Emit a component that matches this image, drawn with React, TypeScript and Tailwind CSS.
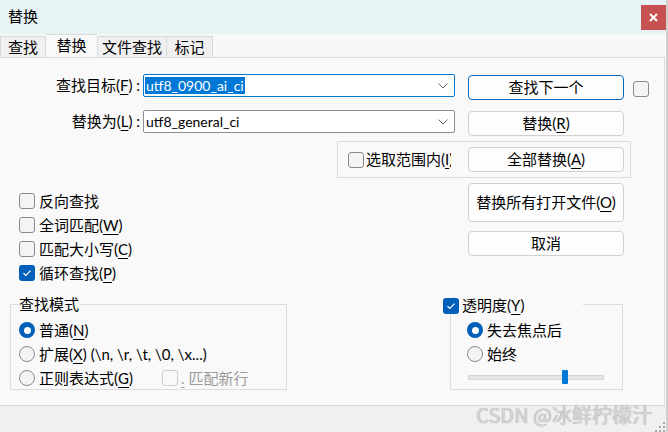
import React from 'react';

function Key({ k }: { k: string }) {
  return (
    <span>
      (<span className="underline underline-offset-[3px] decoration-1">{k}</span>)
    </span>
  );
}

function CheckBox({ checked = false, disabled = false }: { checked?: boolean; disabled?: boolean }) {
  if (checked) {
    return (
      <span className="w-4 h-4 shrink-0 rounded-[3px] bg-[#005fb8] flex items-center justify-center">
        <svg width="10" height="8" viewBox="0 0 10 8">
          <path d="M1.5 4.2 L3.8 6.4 L8.6 1.6" fill="none" stroke="#fff" strokeWidth="1.2" />
        </svg>
      </span>
    );
  }
  return (
    <span
      className={
        disabled
          ? 'block w-4 h-4 shrink-0 rounded-[3px] border border-[#cdcdcd] bg-[#f9f9f9]'
          : 'block w-4 h-4 shrink-0 rounded-[3px] border border-[#8a8a8a] bg-[#f4f4f4]'
      }
    />
  );
}

function Radio({ on = false }: { on?: boolean }) {
  if (on) {
    return (
      <span className="w-4 h-4 shrink-0 rounded-full bg-[#005fb8] flex items-center justify-center">
        <span className="w-[7px] h-[7px] rounded-full bg-white" />
      </span>
    );
  }
  return <span className="block w-4 h-4 shrink-0 rounded-full border border-[#8a8a8a] bg-[#f4f4f4]" />;
}

function Combo({ value, focused = false }: { value: string; focused?: boolean }) {
  return (
    <div
      className={
        'w-[312px] h-[23px] bg-white rounded-[2px] border flex items-center pl-[1px] pr-[6px] text-[14px] ' +
        (focused ? 'border-[#0078d4]' : 'border-[#8f8f8f]')
      }
    >
      <span className="flex-1">
        {focused ? (
          <span className="bg-[#0078d7] text-white leading-[17px] inline-block px-[1px]">{value}</span>
        ) : (
          <span className="leading-[17px] inline-block px-[1px]">{value}</span>
        )}
      </span>
      <svg width="10" height="6" viewBox="0 0 10 6">
        <path d="M0.5 0.5 L5 5 L9.5 0.5" fill="none" stroke="#606060" strokeWidth="1" />
      </svg>
    </div>
  );
}

function Btn({ children, main = false, tall = false }: { children: React.ReactNode; main?: boolean; tall?: boolean }) {
  return (
    <div
      className={
        'w-[156px] bg-[#fdfdfd] rounded-[4px] border flex items-center justify-center ' +
        (tall ? 'h-[39px] ' : 'h-[25px] ') +
        (main ? 'border-[#0067c0]' : 'border-[#d0d0d0]')
      }
    >
      {children}
    </div>
  );
}

const options = [
  { label: '反向查找', key: '', checked: false },
  { label: '全词匹配', key: 'W', checked: false },
  { label: '匹配大小写', key: 'C', checked: false },
  { label: '循环查找', key: 'P', checked: true },
];

export default function App() {
  return (
    <div className="w-[668px] h-[432px] flex flex-col bg-[#f9f9f9] border-r-2 border-[#cfcfcf] overflow-hidden text-[15px] text-black font-['Lato','Noto_Sans_CJK_SC',sans-serif]">
      {/* title bar */}
      <div className="h-[34px] shrink-0 bg-[#e8f3f6] flex items-start justify-between pl-2">
        <span className="mt-[6px] leading-[20px]">替换</span>
        <div className="mt-[5px] w-[25px] h-[25px] bg-[#c75050] flex items-center justify-center">
          <svg width="9" height="9" viewBox="0 0 9 9">
            <path d="M1 1 L8 8 M8 1 L1 8" stroke="#fff" strokeWidth="2" />
          </svg>
        </div>
      </div>

      {/* tabs */}
      <div className="h-[23px] shrink-0 bg-[#f8f8f8] flex items-end">
        <div className="w-[46px] h-[21px] bg-[#f0f0f0] border border-b-0 border-[#d9d9d9] flex items-center justify-center leading-none">查找</div>
        <div className="w-[51px] h-[23px] bg-[#f9f9f9] border-t border-[#d9d9d9] flex items-start justify-center pt-[1px] leading-[18px]">替换</div>
        <div className="w-[70px] h-[21px] bg-[#f0f0f0] border border-b-0 border-[#d9d9d9] flex items-center justify-center leading-none">文件查找</div>
        <div className="w-[46px] h-[21px] bg-[#f0f0f0] border border-b-0 border-l-0 border-[#d9d9d9] flex items-center justify-center leading-none">标记</div>
      </div>

      {/* panel */}
      <div className="w-[665px] h-[348px] shrink-0 border-t border-r border-[#dcdcdc] pt-[16px]">
        {/* find row */}
        <div className="flex items-start h-[26px]">
          <div className="w-[143px] h-[23px] pr-[3px] flex items-center justify-end whitespace-nowrap">
            查找目标<Key k="F" />&nbsp;:
          </div>
          <Combo value="utf8_0900_ai_ci" focused />
          <div className="ml-[13px] mt-[1px]">
            <Btn main>查找下一个</Btn>
          </div>
          <div className="ml-[9px] mt-[7px]">
            <CheckBox />
          </div>
        </div>

        {/* replace row */}
        <div className="flex items-start h-[26px] mt-[10px]">
          <div className="w-[143px] h-[23px] pr-[3px] flex items-center justify-end whitespace-nowrap">
            替换为<Key k="L" />&nbsp;:
          </div>
          <Combo value="utf8_general_ci" />
          <div className="ml-[13px] mt-[1px]">
            <Btn>
              替换<Key k="R" />
            </Btn>
          </div>
        </div>

        {/* selection range group */}
        <div className="ml-[337px] mt-[5px] w-[294px] h-[37px] border border-[#dcdcdc] flex items-center pl-[10px]">
          <CheckBox />
          <span className="ml-[2px] w-[85px] overflow-hidden whitespace-nowrap">
            选取范围内(<span className="underline underline-offset-[3px]">I</span>)
          </span>
          <div className="ml-[17px]">
            <Btn>
              全部替换<Key k="A" />
            </Btn>
          </div>
        </div>

        {/* options + buttons */}
        <div className="flex mt-[5px]">
          <div className="w-[468px] pl-[19px] pt-[6px] flex flex-col">
            {options.map((o, i) => (
              <div key={i} className="h-[24px] flex items-center gap-[4px] whitespace-nowrap">
                <CheckBox checked={o.checked} />
                <span>
                  {o.label}
                  {o.key && <Key k={o.key} />}
                </span>
              </div>
            ))}
          </div>
          <div className="flex flex-col gap-[9px]">
            <Btn tall>
              替换所有打开文件<Key k="O" />
            </Btn>
            <Btn>取消</Btn>
          </div>
        </div>

        {/* groups */}
        <div className="flex mt-[9px]">
          <fieldset className="ml-[10px] w-[277px] h-[96px] border border-[#dcdcdc] pl-[8px]">
            <legend className="ml-[-1px] px-[1px] leading-[20px]">查找模式</legend>
            <div className="pt-[4px] flex flex-col">
              <div className="h-[24px] flex items-center gap-[4px]">
                <Radio on />
                <span>
                  普通<Key k="N" />
                </span>
              </div>
              <div className="h-[24px] flex items-center gap-[4px] whitespace-nowrap">
                <Radio />
                <span>
                  扩展<Key k="X" /> (\n, \r, \t, \0, \x...)
                </span>
              </div>
              <div className="h-[24px] flex items-center whitespace-nowrap">
                <Radio />
                <span className="ml-[4px]">
                  正则表达式<Key k="G" />
                </span>
                <span className="ml-[29px]">
                  <CheckBox disabled />
                </span>
                <span className="ml-[3px] text-[#9a9a9a]">
                  <span className="underline underline-offset-[3px]">.</span> 匹配新行
                </span>
              </div>
            </div>
          </fieldset>

          <fieldset className="ml-[163px] w-[173px] h-[96px] border border-[#dcdcdc] pl-[16px]">
            <legend className="ml-[-24px] w-[140px] h-[20px] bg-[#f9f9f9] flex items-center gap-[3px] whitespace-nowrap">
              <span className="mt-[4px]">
                <CheckBox checked />
              </span>
              <span className="mt-[2px]">
                透明度<Key k="Y" />
              </span>
            </legend>
            <div className="pt-[4px] flex flex-col">
              <div className="h-[24px] flex items-center gap-[4px]">
                <Radio on />
                <span>失去焦点后</span>
              </div>
              <div className="h-[24px] flex items-center gap-[4px]">
                <Radio />
                <span>始终</span>
              </div>
              <div className="mt-[4px] ml-[1px] w-[136px] h-[14px] flex items-center">
                <div className="w-[136px] h-[5px] bg-[#e6e6e6] border border-[#d4d4d4] rounded-[1px] flex">
                  <span className="ml-[93px] mt-[-6px] w-[6px] h-[14px] bg-[#0078d7] rounded-[1px]" />
                </div>
              </div>
            </div>
          </fieldset>
        </div>
      </div>

      {/* status strip */}
      <div className="flex-1 bg-[#f0f0f0] border-t border-[#d9d9d9] flex justify-end items-start">
        <span className="mr-[3px] leading-[18px] text-[20px] text-[#d6d6d6] [text-shadow:0_0_1px_#8a8a8a] font-['Noto_Sans_CJK_SC',sans-serif]">
          CSDN @冰鲜柠檬汁
        </span>
        <svg className="mt-[16px] mr-[1px]" width="10" height="10" viewBox="0 0 10 10">
          <g fill="#a8a8a8">
            <rect x="8" y="0" width="2" height="2" />
            <rect x="4" y="4" width="2" height="2" />
            <rect x="8" y="4" width="2" height="2" />
            <rect x="0" y="8" width="2" height="2" />
            <rect x="4" y="8" width="2" height="2" />
            <rect x="8" y="8" width="2" height="2" />
          </g>
        </svg>
      </div>
    </div>
  );
}
